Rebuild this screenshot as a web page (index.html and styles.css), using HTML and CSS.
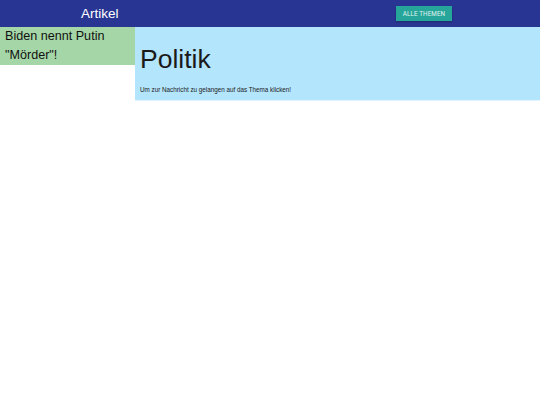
FILE: index.html
```html
<!DOCTYPE html>
<html lang="de">
<head>
<meta charset="utf-8">
<link rel="stylesheet" href="styles.css">
</head>
<body>
<header class="topbar">
  <div class="brand">Artikel</div>
  <button class="btn">ALLE THEMEN</button>
</header>
<div class="content">
  <aside class="sidebar">
    <div class="article">Biden nennt Putin "Mörder"!</div>
  </aside>
  <main class="panel">
    <h1 class="title">Politik</h1>
    <p class="hint">Um zur Nachricht zu gelangen auf das Thema klicken!</p>
  </main>
</div>
</body>
</html>
```
FILE: styles.css
```css
* { box-sizing: border-box; }
html, body { margin: 0; padding: 0; background: #fff; font-family: "Liberation Sans", Arial, sans-serif; }
.topbar {
  height: 27px;
  background: #283593;
  display: flex;
  align-items: center;
}
.brand {
  color: #fff;
  font-size: 13.5px;
  margin-left: 81px;
  width: 315px;
  line-height: 27px;
}
.btn {
  background: #26a69a;
  color: #e0f2f1;
  border: none;
  height: 15px;
  width: 56px;
  padding: 0;
  font-family: "Roboto", "Liberation Sans", sans-serif;
  font-size: 6.3px;
  letter-spacing: 0.1px;
  box-shadow: 0 1px 2px rgba(0,0,0,0.25);
}
.content {
  display: flex;
  align-items: flex-start;
}
.sidebar {
  width: 135px;
  background: #a5d6a7;
}
.article {
  font-size: 12.6px;
  line-height: 19px;
  padding: 0 5px;
  color: #111;
}
.panel {
  flex: 1;
  background: #b3e5fc;
  height: 74px;
  padding: 14px 5px 0 5px;
  border-bottom: 1px solid #e1f5fe;
}
.title {
  margin: 0;
  font-weight: normal;
  font-size: 26.5px;
  line-height: 36px;
  color: #1a1a1a;
}
.hint {
  margin: 9px 0 0 0;
  font-size: 6.3px;
  color: #222;
}
```
